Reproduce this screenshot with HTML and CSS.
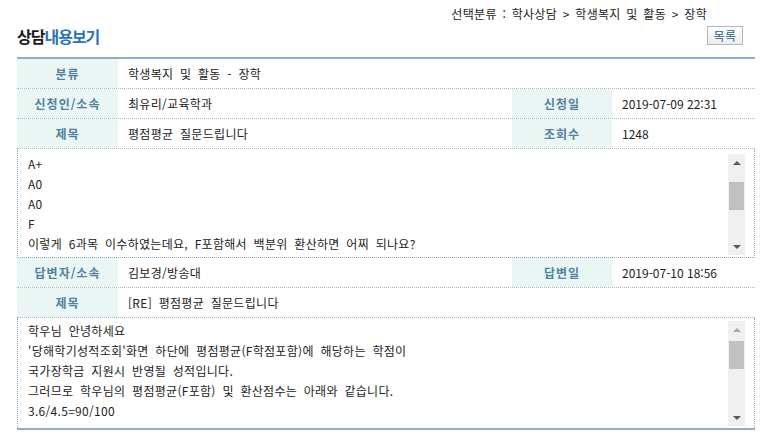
FILE: index.html
```html
<!DOCTYPE html>
<html lang="ko">
<head>
<meta charset="utf-8">
<link rel="stylesheet" href="styles.css">
</head>
<body>
<div class="page">
  <div class="crumb">선택분류 : 학사상담 &gt; 학생복지 및 활동 &gt; 장학</div>
  <div class="titlebar">
    <h1 class="title"><span class="t-dark">상담</span><span class="t-blue">내용보기</span></h1>
    <button class="btn">목록</button>
  </div>
  <div class="board">
    <div class="row">
      <div class="lbl">분류</div>
      <div class="val span3">학생복지 및 활동 - 장학</div>
    </div>
    <div class="row">
      <div class="lbl">신청인/소속</div>
      <div class="val">최유리/교육학과</div>
      <div class="lbl">신청일</div>
      <div class="val num">2019-07-09 22:31</div>
    </div>
    <div class="row">
      <div class="lbl">제목</div>
      <div class="val">평점평균 질문드립니다</div>
      <div class="lbl">조회수</div>
      <div class="val num">1248</div>
    </div>
    <div class="box">
      <div class="text">
        <div class="line">A+</div>
        <div class="line">A0</div>
        <div class="line">A0</div>
        <div class="line">F</div>
        <div class="line">이렇게 6과목 이수하였는데요, F포함해서 백분위 환산하면 어찌 되나요?</div>
      </div>
      <div class="sbar">
        <div class="arrow up"></div>
        <div class="track"><div class="thumb thumb1"></div></div>
        <div class="arrow down"></div>
      </div>
    </div>
    <div class="row">
      <div class="lbl">답변자/소속</div>
      <div class="val">김보경/방송대</div>
      <div class="lbl">답변일</div>
      <div class="val num">2019-07-10 18:56</div>
    </div>
    <div class="row">
      <div class="lbl">제목</div>
      <div class="val span3">[RE] 평점평균 질문드립니다</div>
    </div>
    <div class="box last">
      <div class="text">
        <div class="line">학우님 안녕하세요</div>
        <div class="line">'당해학기성적조회'화면 하단에 평점평균(F학점포함)에 해당하는 학점이</div>
        <div class="line">국가장학금 지원시 반영될 성적입니다.</div>
        <div class="line">그러므로 학우님의 평점평균(F포함) 및 환산점수는 아래와 같습니다.</div>
        <div class="line">3.6/4.5=90/100</div>
      </div>
      <div class="sbar">
        <div class="arrow up light"></div>
        <div class="track"><div class="thumb thumb2"></div></div>
        <div class="arrow down"></div>
      </div>
    </div>
  </div>
</div>
</body>
</html>
```

FILE: styles.css
```css
* { box-sizing: border-box; }
html, body { margin: 0; padding: 0; background: #fff; }
body {
  font-family: "Noto Sans CJK KR", "Noto Sans", sans-serif;
  font-size: 12px;
  color: #222;
  letter-spacing: 0.3px;
  word-spacing: 3px;
}
.page {
  width: 762px;
  padding: 0 7px 0 17px;
}
.crumb {
  height: 26px;
  padding-top: 5px;
  padding-right: 48px;
  text-align: right;
  line-height: 18px;
  color: #222;
  word-spacing: 2px;
}
.titlebar {
  display: flex;
  justify-content: space-between;
  align-items: flex-start;
  height: 31px;
}
.title {
  margin: 0;
  font-size: 16px;
  font-weight: bold;
  letter-spacing: -1px;
  word-spacing: 0;
  line-height: 20px;
}
.t-dark { color: #1a1a1a; }
.t-blue { color: #2b73b5; }
.btn {
  margin: 0 12px 0 0;
  width: 36px;
  height: 19px;
  padding: 0;
  border: 1px solid #b5b5b5;
  background: linear-gradient(#ffffff, #ececec);
  font-family: "Noto Sans CJK KR", sans-serif;
  font-size: 12px;
  line-height: 16px;
  letter-spacing: 0.5px;
  color: #2e5f86;
}
.board {
  border-top: 2px solid #8eb0c2;
  border-bottom: 2px solid #8eb0c2;
}
.row {
  display: grid;
  grid-template-columns: 101px 394px 100px 1fr;
  height: 30px;
  border-bottom: 1px dotted #a9b9c2;
}
.lbl {
  background: #e9f6f4;
  color: #52819f;
  font-weight: bold;
  text-align: center;
  line-height: 29px;
  letter-spacing: 1px;
  word-spacing: 0;
}
.val {
  padding-left: 10px;
  line-height: 29px;
}
.val.num { word-spacing: 0; letter-spacing: 0; }
.span3 { grid-column: 2 / 5; }
.box {
  display: flex;
  height: 109px;
  border: 1px dotted #86a8ba;
  border-top: none;
  padding: 5px 9px 2px 10px;
}
.box.last {
  height: 110px;
  border-bottom: none;
  padding-top: 3px;
}
.text {
  flex: 1;
  overflow: hidden;
}
.line {
  height: 20px;
  line-height: 20px;
  white-space: nowrap;
}
.sbar {
  width: 17px;
  display: flex;
  flex-direction: column;
  background: #f0f0f0;
}
.arrow {
  height: 17px;
  display: flex;
  align-items: center;
  justify-content: center;
}
.arrow::before {
  content: "";
  width: 0;
  height: 0;
  border-left: 4px solid transparent;
  border-right: 4px solid transparent;
}
.arrow.up::before { border-bottom: 4px solid #5a5a5a; }
.arrow.down::before { border-top: 4px solid #5a5a5a; }
.arrow.up.light::before { border-bottom-color: #a9a9a9; }
.track {
  flex: 1;
  padding: 0 1px;
}
.thumb {
  background: #c1c1c1;
  width: 15px;
}
.thumb1 { margin-top: 11px; height: 28px; }
.thumb2 { margin-top: 3px; height: 28px; }
```
